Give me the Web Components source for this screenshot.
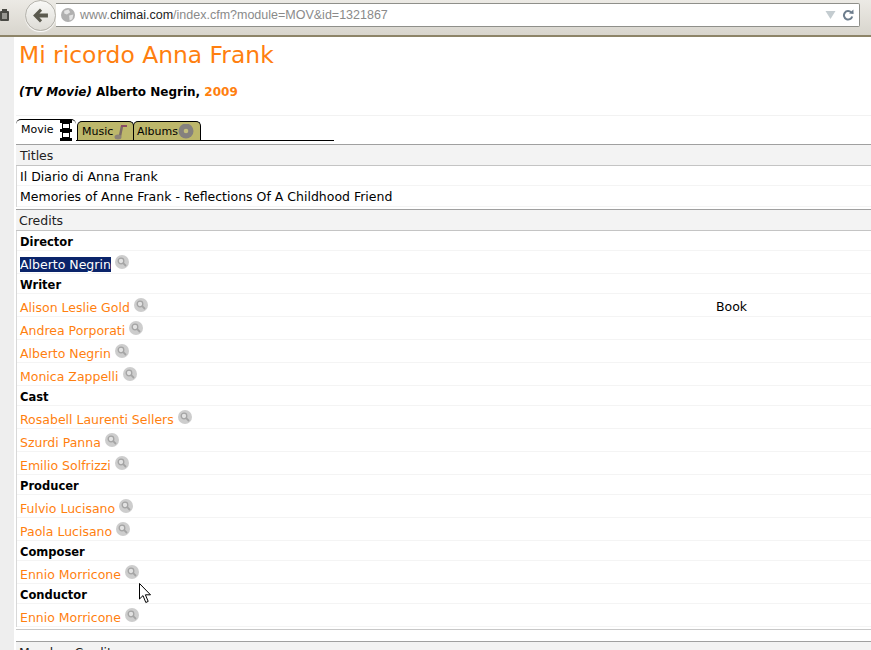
<!DOCTYPE html>
<html>
<head>
<meta charset="utf-8">
<title>Mi ricordo Anna Frank</title>
<style>
    html, body { margin: 0; height: 650px; overflow: hidden; background: #fff; }
    body { font-family: "DejaVu Sans", Verdana, sans-serif; font-size: 12.5px; color: #000; position: relative; }
    .page { display: flex; height: 613px; }
    .gutter { width: 14px; background: #eeeeee; flex: none; }
    .main { flex: 1; min-width: 0; padding-left: 2px; }
</style>
</head>
<body>
<browser-bar></browser-bar>
<div class="page">
    <div class="gutter"></div>
    <div class="main">
        <movie-title year="2009">Mi ricordo Anna Frank</movie-title>
        <tab-bar></tab-bar>
        <data-panel heading="Titles" class="titles">
            <data-row height="20" kind="first">Il Diario di Anna Frank</data-row>
            <data-row height="21">Memories of Anne Frank - Reflections Of A Childhood Friend</data-row>
        </data-panel>
        <data-panel heading="Credits" class="credits">
            <data-row kind="role">Director</data-row>
            <data-row kind="selected">Alberto Negrin</data-row>
            <data-row kind="role">Writer</data-row>
            <data-row kind="person" note="Book">Alison Leslie Gold</data-row>
            <data-row kind="person">Andrea Porporati</data-row>
            <data-row kind="person">Alberto Negrin</data-row>
            <data-row kind="person">Monica Zappelli</data-row>
            <data-row kind="role">Cast</data-row>
            <data-row kind="person">Rosabell Laurenti Sellers</data-row>
            <data-row kind="person">Szurdi Panna</data-row>
            <data-row kind="person">Emilio Solfrizzi</data-row>
            <data-row kind="role">Producer</data-row>
            <data-row kind="person">Fulvio Lucisano</data-row>
            <data-row kind="person">Paola Lucisano</data-row>
            <data-row kind="role">Composer</data-row>
            <data-row kind="person">Ennio Morricone</data-row>
            <data-row kind="role">Conductor</data-row>
            <data-row kind="person">Ennio Morricone</data-row>
        </data-panel>
        <data-panel heading="Member Credits" class="members"></data-panel>
    </div>
</div>
<mouse-cursor></mouse-cursor>

<script>
class BrowserBar extends HTMLElement {
    connectedCallback() {
        this.attachShadow({ mode: "open" });
        this.shadowRoot.innerHTML = `
            <style>
                :host {
                    display: flex;
                    align-items: flex-start;
                    height: 37px;
                    box-sizing: border-box;
                    background: linear-gradient(#eceae5, #d8d5cd);
                    border-bottom: 2px solid #8d8468;
                    position: relative;
                }
                .menu { width: 9px; height: 12px; margin: 9px 0 0 0; flex: none; }
                .back {
                    position: absolute;
                    left: 25px;
                    top: 0;
                    width: 29px;
                    height: 29px;
                    border-radius: 50%;
                    background: linear-gradient(#f8f8f6, #dedcd6);
                    border: 1px solid #b5b3ac;
                    box-shadow: 0 1px 1px #fff;
                    display: flex;
                    align-items: center;
                    justify-content: center;
                }
                .url {
                    margin: 3px 11px 0 47px;
                    flex: 1;
                    height: 24px;
                    box-sizing: border-box;
                    background: #fff;
                    border: 1px solid #8f8f8a;
                    border-left: none;
                    border-radius: 0 2px 2px 0;
                    display: flex;
                    align-items: center;
                    padding-left: 5px;
                    font: 12.5px "Liberation Sans", Arial, sans-serif;
                    color: #8a8a8a;
                    white-space: nowrap;
                }
                .globe { width: 14px; height: 14px; margin-right: 5px; flex: none; }
                .url b { font-weight: normal; color: #222; }
                .spacer { flex: 1; }
                .drop { margin-right: 6px; }
                .reload { margin-right: 5px; }
            </style>
            <svg class="menu" viewBox="0 0 9 12">
                <rect x="0" y="2" width="9" height="10" rx="1" fill="#4a4a44"/>
                <rect x="2" y="0" width="5" height="3" fill="#4a4a44"/>
                <path d="M2 5h5M2 7h5M2 9h5" stroke="#e6e4de" stroke-width="1"/>
            </svg>
            <div class="back">
                <svg width="17" height="15" viewBox="0 0 16 14">
                    <path d="M7.5 0.5 L1 7 L7.5 13.5 L9.5 11.5 L7 8.8 H15 V5.2 H7 L9.5 2.5 Z" fill="#5b5a4f"/>
                </svg>
            </div>
            <div class="url">
                <svg class="globe" viewBox="0 0 13 13">
                    <circle cx="6.5" cy="6.5" r="6.5" fill="#b0b0b0"/>
                    <path d="M3 2.5 L7 1.5 L8.5 4 L5.5 6 L3 5 Z M7.5 7 L11.5 6 L10.5 10.5 L8 11.5 Z" fill="#e4e4e4"/>
                </svg>
                <span>www.<b>chimai.com</b>/index.cfm?module=MOV&amp;id=1321867</span>
                <span class="spacer"></span>
                <svg class="drop" width="11" height="8" viewBox="0 0 10 8"><path d="M0 0 H10 L5 8 Z" fill="#c4ccd0"/></svg>
                <svg class="reload" width="12" height="12" viewBox="0 0 12 12">
                    <path d="M9.2 3.4 A4.2 4.2 0 1 0 10.2 7.4" fill="none" stroke="#6d7d8d" stroke-width="2"/>
                    <path d="M7 4.6 L11.6 5 L11.4 0.4 Z" fill="#6d7d8d"/>
                </svg>
            </div>
        `;
    }
}
customElements.define("browser-bar", BrowserBar);

class MovieTitle extends HTMLElement {
    connectedCallback() {
        this.attachShadow({ mode: "open" });
        this.shadowRoot.innerHTML = `
            <style>
                :host { display: block; height: 79px; box-sizing: border-box; padding: 4px 0 0 3px; border-bottom: 1px solid #f2f2f2; }
                h1 { margin: 0; font-size: 23.4px; line-height: 28px; font-weight: normal; color: #ff7f0f; }
                p { margin: 15px 0 0; font-size: 12px; line-height: 16px; font-weight: bold; }
                span { color: #ff7f0f; }
            </style>
            <h1><slot></slot></h1>
            <p><i>(TV Movie)</i> Alberto Negrin, <span>${this.getAttribute("year")}</span></p>
        `;
    }
}
customElements.define("movie-title", MovieTitle);

class TabBar extends HTMLElement {
    connectedCallback() {
        this.attachShadow({ mode: "open" });
        this.shadowRoot.innerHTML = `
            <style>
                :host {
                    display: flex;
                    align-items: flex-end;
                    width: 318px;
                    height: 25px;
                    box-sizing: border-box;
                    margin-bottom: 3px;
                    border-bottom: 1px solid #000;
                    font-size: 11px;
                }
                .tab {
                    height: 19px;
                    box-sizing: border-box;
                    display: flex;
                    align-items: center;
                    background: #bdb76b;
                    border: 1px solid #000;
                    border-bottom: none;
                    border-radius: 5px 5px 0 0;
                    padding: 1px 0 0 4px;
                    margin-left: -1px;
                    position: relative;
                }
                .movie {
                    height: 22px;
                    width: 60px;
                    margin: 0 0 -1px 0;
                    background: #fff;
                    padding: 0 0 2px 5px;
                    border-right: none;
                    border-left: none;
                    z-index: 1;
                }
                .music { width: 57px; margin-left: 1px; }
                .albums { width: 68px; padding-left: 3px; }
                svg { flex: none; }
            </style>
            <div class="tab movie">Movie
                <svg width="12" height="21" viewBox="0 0 12 21" style="margin:1px 0 0 6px">
                    <path fill-rule="evenodd" fill="#000" d="M0 0 H12 V3 H10 V9 H12 V12 H10 V18 H12 V21 H0 V18 H2 V12 H0 V9 H2 V3 H0 Z M3 4 V8 H9 V4 Z M3 13 V17 H9 V13 Z"/>
                </svg>
            </div>
            <div class="tab music">Music
                <svg width="14" height="16" viewBox="0 0 14 16" style="margin-left:1px">
                    <path d="M8 2 L6 12" stroke="#7b6a68" stroke-width="2.5"/>
                    <ellipse cx="4" cy="13" rx="3.5" ry="2.5" fill="#8b8178"/>
                    <path d="M7 2 H13" stroke="#8a4b62" stroke-width="2"/>
                </svg>
            </div>
            <div class="tab albums">Albums
                <svg width="16" height="16" viewBox="0 0 16 16">
                    <circle cx="8" cy="7" r="7.5" fill="#85817e"/>
                    <circle cx="8" cy="7" r="2.3" fill="#c4bf7d"/>
                </svg>
            </div>
        `;
    }
}
customElements.define("tab-bar", TabBar);

class DataPanel extends HTMLElement {
    connectedCallback() {
        this.attachShadow({ mode: "open" });
        this.shadowRoot.innerHTML = `
            <style>
                :host { display: block; margin-bottom: 2px; }
                :host(.credits) { margin-bottom: 11px; border-bottom: 1px solid #c8c8c8; padding-bottom: 2px; }
                :host(.titles) .head { padding-left: 4px; }
                :host(.members) .head { border-bottom: none; }
                .head {
                    height: 22px;
                    box-sizing: border-box;
                    background: #f3f3f3;
                    border-top: 1px solid #a0a0a0;
                    border-bottom: 1px solid #c4c4c4;
                    padding-left: 3px;
                    line-height: 21px;
                    color: #222;
                }
                .body { border-left: 1px solid #d8d8d8; }
            </style>
            <div class="head">${this.getAttribute("heading")}</div>
            <div class="body"><slot></slot></div>
        `;
    }
}
customElements.define("data-panel", DataPanel);

class DataRow extends HTMLElement {
    connectedCallback() {
        const kind = this.getAttribute("kind") || "plain";
        const note = this.getAttribute("note");
        const h = this.getAttribute("height") || (kind == "role" ? 20 : 23);
        this.attachShadow({ mode: "open" });
        this.shadowRoot.innerHTML = `
            <style>
                :host {
                    display: flex;
                    align-items: center;
                    height: ${h}px;
                    box-sizing: border-box;
                    padding: ${kind == "plain" ? 0 : 2}px 0 0 3px;
                    border-bottom: 1px solid #f4f4f4;
                    position: relative;
                    white-space: nowrap;
                }
                :host([kind="role"]) .name { font-weight: bold; font-size: 11.5px; }
                :host([kind="person"]) .name { color: #ff7f0f; padding-top: 3px; }
                :host([kind="selected"]) .name { background: #0a246a; color: #fff; line-height: 15px; margin-top: 3px; }
                .lens { margin: -3px 0 0 4px; flex: none; }
                .note { position: absolute; left: 699px; top: 5px; }
            </style>
            <span class="name"><slot></slot></span>
            ${kind == "person" || kind == "selected" ? `
            <svg class="lens" width="14" height="14" viewBox="0 0 14 14">
                <circle cx="7" cy="7" r="7" fill="#cdcdcd"/>
                <circle cx="6" cy="6" r="2.8" fill="#e2e2e2" stroke="#a4a4a4" stroke-width="1.3"/>
                <path d="M8.2 8.2 L11 11" stroke="#a4a4a4" stroke-width="1.8"/>
            </svg>` : ""}
            ${note ? `<span class="note">${note}</span>` : ""}
        `;
    }
}
customElements.define("data-row", DataRow);

class MouseCursor extends HTMLElement {
    connectedCallback() {
        this.attachShadow({ mode: "open" });
        this.shadowRoot.innerHTML = `
            <style>
                :host { position: absolute; left: 139px; top: 583px; width: 13px; height: 21px; }
            </style>
            <svg width="13" height="21" viewBox="0 0 13 21">
                <path d="M0.5 0.5 V16 L4 12.6 L6.8 19.5 L9.2 18.4 L6.4 11.8 H11.5 Z" fill="#fff" stroke="#000" stroke-width="1"/>
            </svg>
        `;
    }
}
customElements.define("mouse-cursor", MouseCursor);
</script>
</body>
</html>
